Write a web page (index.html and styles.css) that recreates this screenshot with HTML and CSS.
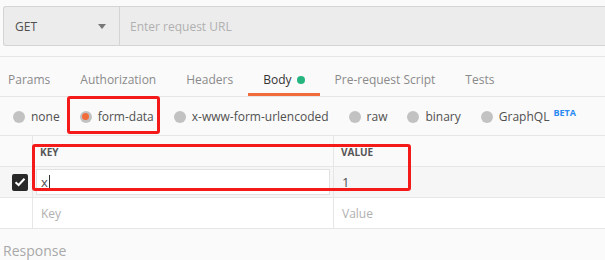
FILE: index.html
```html
<!DOCTYPE html>
<html lang="en">

<head>
  <meta charset="UTF-8">
  <title>Request</title>
  <link rel="stylesheet" href="styles.css">
</head>

<body>
  <div class="url-bar">
    <div class="method">
      <span>GET</span>
      <span class="caret"></span>
    </div>
    <div class="url-input">Enter request URL</div>
  </div>

  <div class="tabs">
    <div class="tab">Params</div>
    <div class="tab">Authorization</div>
    <div class="tab">Headers</div>
    <div class="tab active">Body <span class="dot"></span></div>
    <div class="tab">Pre-request Script</div>
    <div class="tab">Tests</div>
  </div>

  <div class="body-types">
    <div class="radio-item"><span class="radio"></span>none</div>
    <div class="radio-item"><span class="radio checked"></span>form-data</div>
    <div class="radio-item"><span class="radio"></span>x-www-form-urlencoded</div>
    <div class="radio-item"><span class="radio"></span>raw</div>
    <div class="radio-item"><span class="radio"></span>binary</div>
    <div class="radio-item"><span class="radio"></span>GraphQL<sup class="beta">BETA</sup></div>
    <div class="mark mark-form"></div>
  </div>

  <div class="kv-table">
    <div class="kv-row kv-head">
      <div class="kv-check"></div>
      <div class="kv-cell">KEY</div>
      <div class="kv-cell">VALUE</div>
    </div>
    <div class="kv-row kv-filled">
      <div class="kv-check">
        <span class="checkbox">
          <svg width="12" height="10" viewBox="0 0 12 10">
            <path d="M1.5 5.2 L4.6 8 L10.5 1.8" fill="none" stroke="#fff" stroke-width="2" />
          </svg>
        </span>
      </div>
      <div class="kv-cell"><div class="kv-input">x<span class="cursor"></span></div></div>
      <div class="kv-cell kv-value">1</div>
    </div>
    <div class="kv-row kv-empty">
      <div class="kv-check"></div>
      <div class="kv-cell placeholder">Key</div>
      <div class="kv-cell placeholder">Value</div>
    </div>
    <div class="mark mark-table"></div>
  </div>

  <div class="response">Response</div>
</body>

</html>
```

FILE: styles.css
```css
* {
  padding: 0;
  margin: 0;
  box-sizing: border-box;
}

body {
  font-family: "Open Sans", "Liberation Sans", sans-serif;
  font-size: 12px;
  background: #fafafa;
  color: #505050;
  width: 605px;
  height: 260px;
  overflow: hidden;
}

.url-bar {
  display: flex;
  height: 40px;
  margin: 6px 0 0 3px;
  background: #ececec;
  border: 1px solid #d4d4d4;
  border-right: none;
  border-radius: 3px 0 0 3px;
}

.method {
  width: 116px;
  display: flex;
  align-items: center;
  justify-content: space-between;
  padding: 0 13px 0 11px;
  border-right: 1px solid #d4d4d4;
  color: #505050;
  font-size: 12px;
}

.caret {
  width: 0;
  height: 0;
  border-left: 4px solid transparent;
  border-right: 4px solid transparent;
  border-top: 5px solid #777;
}

.url-input {
  display: flex;
  align-items: center;
  padding-left: 10px;
  color: #b0b0b0;
}

.tabs {
  display: flex;
  height: 41px;
  margin-top: 10px;
  border-top: 1px solid #e6e6e6;
  border-bottom: 1px solid #e6e6e6;
  margin-left: -7px;
}

.tab {
  display: flex;
  align-items: center;
  padding: 9px 15px 0;
  color: #8a8a8a;
  border-bottom: 3px solid transparent;
}

.tab.active {
  color: #333;
  border-bottom-color: #f26b3a;
}

.dot {
  width: 8px;
  height: 8px;
  border-radius: 50%;
  background: #26b47f;
  margin-left: 5px;
}

.body-types {
  position: relative;
  display: flex;
  align-items: center;
  gap: 20px;
  height: 39px;
  padding: 1px 0 0 13px;
  border-bottom: 1px solid #e6e6e6;
}

.radio-item {
  display: flex;
  align-items: center;
  color: #505050;
}

.radio {
  width: 12px;
  height: 12px;
  border-radius: 50%;
  background: #c2c2c2;
  margin-right: 6px;
  display: flex;
  align-items: center;
  justify-content: center;
}

.radio.checked::after {
  content: "";
  width: 7px;
  height: 7px;
  border-radius: 50%;
  background: #f26b3a;
}

.beta {
  color: #2a8bf2;
  font-size: 9px;
  font-weight: 700;
  margin-left: 4px;
  position: relative;
  top: -4px;
  vertical-align: top;
}

.mark {
  position: absolute;
  border: 3px solid #f51a1a;
  border-radius: 3px;
}

.mark-form {
  left: 67px;
  top: -1px;
  width: 93px;
  height: 38px;
}

.kv-table {
  position: relative;
}

.kv-row {
  display: grid;
  grid-template-columns: 33px 301px 1fr;
  height: 31px;
  border-bottom: 1px solid #e6e6e6;
}

.kv-check {
  border-right: 1px solid #e6e6e6;
  display: flex;
  align-items: center;
  justify-content: center;
  padding-left: 8px;
}

.kv-cell {
  display: flex;
  align-items: center;
  padding-left: 7px;
  border-right: 1px solid #e6e6e6;
}

.kv-cell:last-child {
  border-right: none;
}

.kv-head .kv-cell {
  font-size: 10px;
  font-weight: 700;
  color: #555;
  align-items: flex-start;
  padding-top: 9px;
}

.kv-filled {
  background: #f6f6f6;
}

.kv-filled .kv-cell:nth-child(2) {
  padding: 2px 3px 2px 3px;
}

.kv-input {
  width: 100%;
  height: 100%;
  background: #fff;
  border: 1px solid #e2e2e2;
  display: flex;
  align-items: center;
  padding-left: 4px;
  color: #505050;
  font-size: 13px;
}

.cursor {
  width: 1px;
  height: 15px;
  background: #333;
  margin-left: 1px;
}

.kv-value {
  font-size: 13px;
  padding-left: 8px;
}

.checkbox {
  width: 16px;
  height: 17px;
  border-radius: 2px;
  background: #282828;
  display: flex;
  align-items: center;
  justify-content: center;
}

.kv-empty {
  background: #fff;
}

.placeholder {
  color: #b0b0b0;
  padding-left: 8px;
}

.mark-table {
  left: 32px;
  top: 8px;
  width: 379px;
  height: 47px;
}

.response {
  padding: 12px 0 0 3px;
  font-size: 14px;
  color: #a8a8a8;
}
```
